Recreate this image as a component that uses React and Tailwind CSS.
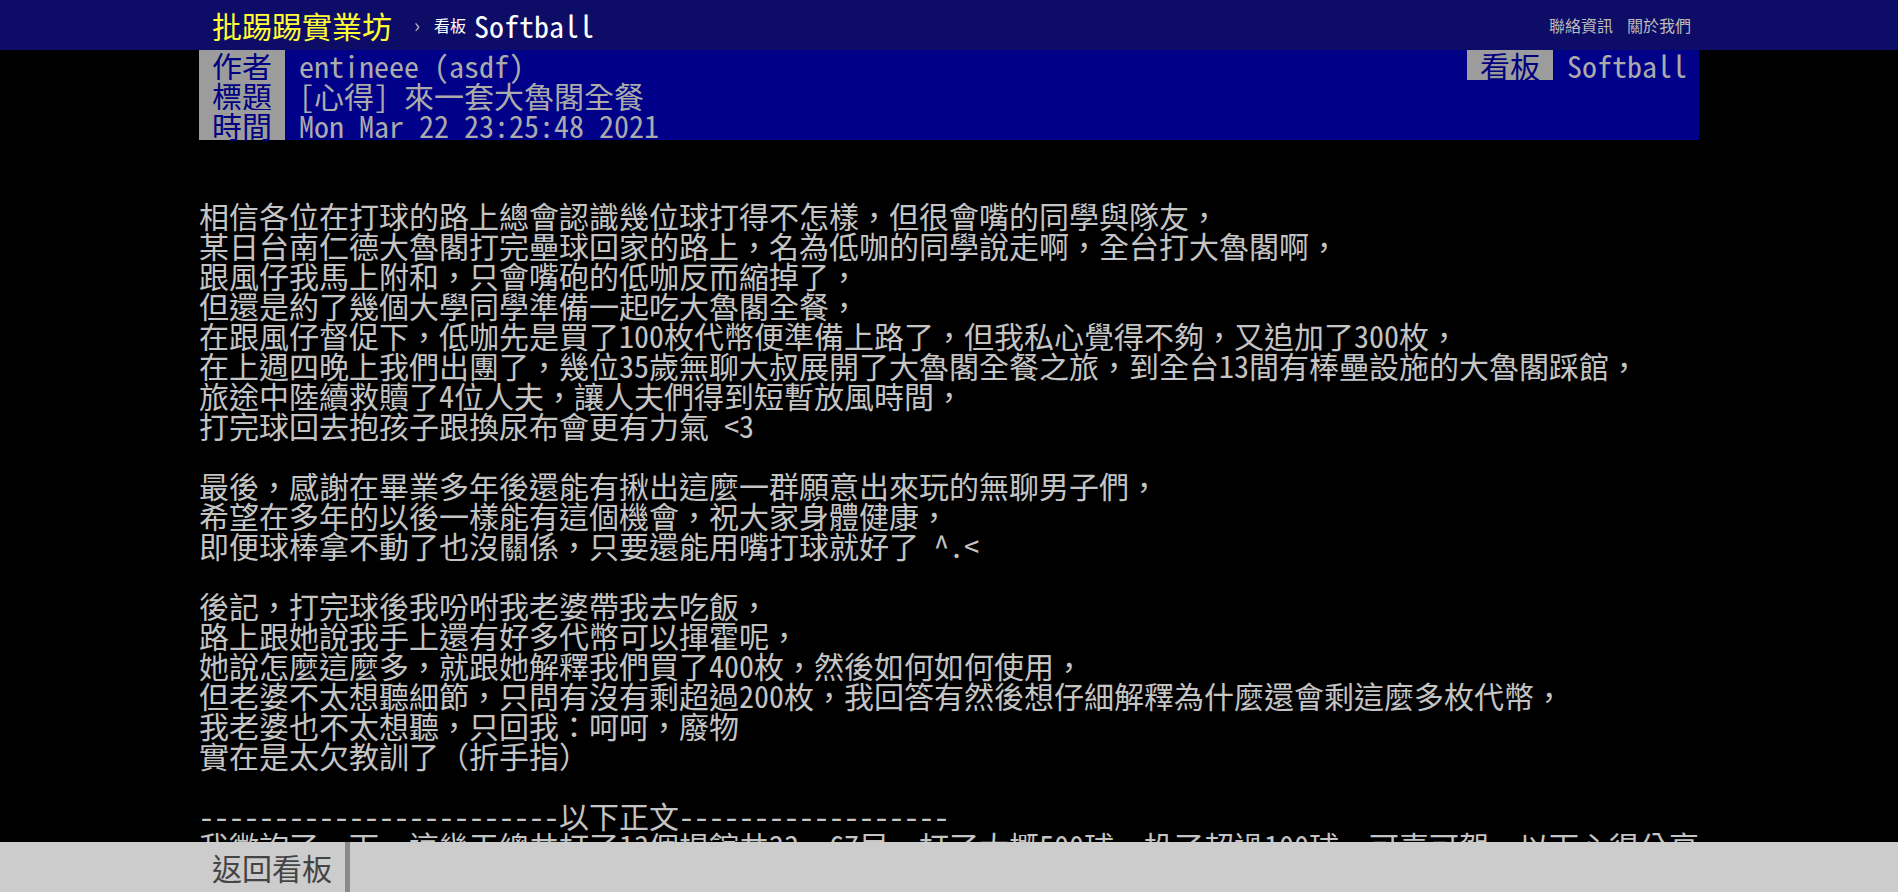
const lines = [
  '',
  '',
  '相信各位在打球的路上總會認識幾位球打得不怎樣，但很會嘴的同學與隊友，',
  '某日台南仁德大魯閣打完壘球回家的路上，名為低咖的同學說走啊，全台打大魯閣啊，',
  '跟風仔我馬上附和，只會嘴砲的低咖反而縮掉了，',
  '但還是約了幾個大學同學準備一起吃大魯閣全餐，',
  '在跟風仔督促下，低咖先是買了100枚代幣便準備上路了，但我私心覺得不夠，又追加了300枚，',
  '在上週四晚上我們出團了，幾位35歲無聊大叔展開了大魯閣全餐之旅，到全台13間有棒壘設施的大魯閣踩館，',
  '旅途中陸續救贖了4位人夫，讓人夫們得到短暫放風時間，',
  '打完球回去抱孩子跟換尿布會更有力氣 <3',
  '',
  '最後，感謝在畢業多年後還能有揪出這麼一群願意出來玩的無聊男子們，',
  '希望在多年的以後一樣能有這個機會，祝大家身體健康，',
  '即便球棒拿不動了也沒關係，只要還能用嘴打球就好了 ^.<',
  '',
  '後記，打完球後我吩咐我老婆帶我去吃飯，',
  '路上跟她說我手上還有好多代幣可以揮霍呢，',
  '她說怎麼這麼多，就跟她解釋我們買了400枚，然後如何如何使用，',
  '但老婆不太想聽細節，只問有沒有剩超過200枚，我回答有然後想仔細解釋為什麼還會剩這麼多枚代幣，',
  '我老婆也不太想聽，只回我：呵呵，廢物',
  '實在是太欠教訓了（折手指）',
  '',
  '------------------------以下正文------------------',
  '我徵詢了一下，這幾天總共打了13個場館共23. 67局，打了大概500球，投了超過100球，可喜可賀，以下心得分享',
  '',
  '',
]

function MetaTag({ children }) {
  return <span className="block h-[30px] bg-[#9c9c9c] px-[13px] leading-[30px] text-[#000080]">{children}</span>
}

function MetaRow({ tag, value }) {
  return (
    <div className="flex h-[30px] leading-[30px]">
      <MetaTag>{tag}</MetaTag>
      <span className="ml-[14px] whitespace-pre text-[#ababab]">{value}</span>
    </div>
  )
}

export default function App() {
  return (
    <div className="relative h-[892px] overflow-hidden bg-black font-['Noto_Sans_Mono_CJK_TC','Noto_Sans_CJK_TC',monospace] text-[30px] text-[#c4c4c4]">
      <div className="h-[50px] bg-[#0d0c66]">
        <div className="mx-auto flex h-full w-[1500px] items-center pl-[13px] pr-[8px]">
          <span className="text-[30px] leading-none text-[#ffff33]">批踢踢實業坊</span>
          <span className="ml-[22px] text-[20px] leading-none text-[#bbb]">›</span>
          <span className="ml-[14px] text-[16px] leading-none text-white">看板</span>
          <span className="ml-[8px] text-[30px] leading-none text-white">Softball</span>
          <div className="ml-auto flex gap-[14px] text-[16px] leading-none text-[#bbb]">
            <span>聯絡資訊</span>
            <span>關於我們</span>
          </div>
        </div>
      </div>

      <div className="mx-auto w-[1500px]">
        <div className="bg-[#000088]">
          <div className="flex h-[30px] justify-between pr-[12px] leading-[30px]">
            <div className="flex">
              <MetaTag>作者</MetaTag>
              <span className="ml-[14px] whitespace-pre text-[#ababab]">entineee (asdf)</span>
            </div>
            <div className="flex">
              <MetaTag>看板</MetaTag>
              <span className="ml-[14px] text-[#ababab]">Softball</span>
            </div>
          </div>
          <MetaRow tag="標題" value="[心得] 來一套大魯閣全餐" />
          <MetaRow tag="時間" value="Mon Mar 22 23:25:48 2021" />
        </div>

        <div>
          {lines.map((line, i) => (
            <div key={i} className="h-[30px] whitespace-pre leading-[30px]">
              {line}
            </div>
          ))}
        </div>
      </div>

      <div className="absolute inset-x-0 bottom-0 h-[50px] bg-[#cccccc]">
        <div className="mx-auto flex h-full w-[1500px]">
          <button
            type="button"
            className="h-full border-r-[5px] border-[#8a8a8a] px-[13px] text-[30px] leading-none text-[#444]"
          >
            返回看板
          </button>
        </div>
      </div>
    </div>
  )
}
